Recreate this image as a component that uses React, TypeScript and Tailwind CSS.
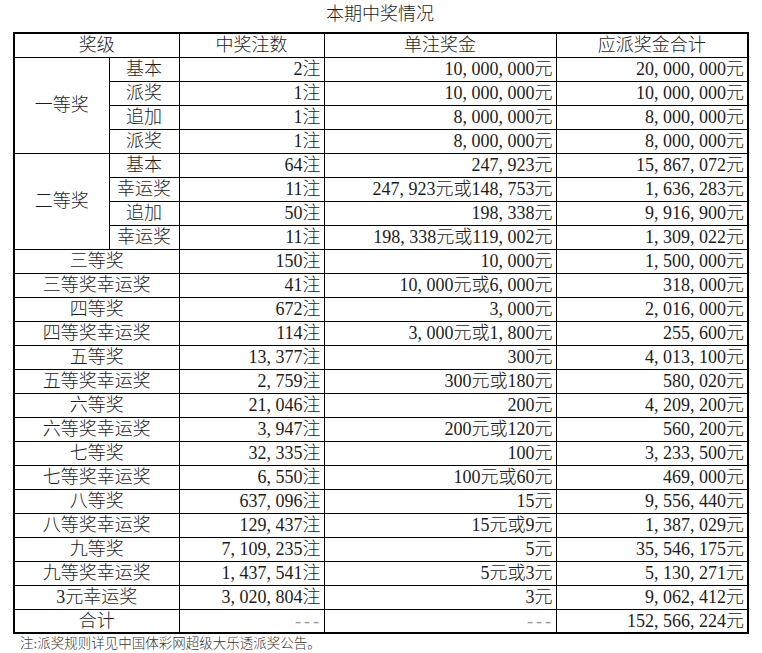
import React from "react";

const FONT = '"Liberation Serif", "Noto Sans CJK SC", serif';

function Num({ s }: { s: string }) {
  const parts: React.ReactNode[] = [];
  let buf = "";
  let k = 0;
  for (const ch of s) {
    if (ch === ",") {
      if (buf) parts.push(<span key={k++}>{buf}</span>);
      buf = "";
      parts.push(
        <span key={k++} className="inline-block w-[0.5em] text-left">
          ,
        </span>
      );
    } else buf += ch;
  }
  if (buf) parts.push(<span key={k++}>{buf}</span>);
  return <>{parts}</>;
}

function Dashes() {
  return (
    <>
      <span className="inline-block w-[0.5em] text-center">-</span>
      <span className="inline-block w-[0.5em] text-center">-</span>
      <span className="inline-block w-[0.5em] text-center">-</span>
    </>
  );
}

type Sub = [string, string, string, string];

const first: Sub[] = [
  ["基本", "2注", "10,000,000元", "20,000,000元"],
  ["派奖", "1注", "10,000,000元", "10,000,000元"],
  ["追加", "1注", "8,000,000元", "8,000,000元"],
  ["派奖", "1注", "8,000,000元", "8,000,000元"],
];
const second: Sub[] = [
  ["基本", "64注", "247,923元", "15,867,072元"],
  ["幸运奖", "11注", "247,923元或148,753元", "1,636,283元"],
  ["追加", "50注", "198,338元", "9,916,900元"],
  ["幸运奖", "11注", "198,338元或119,002元", "1,309,022元"],
];
const rest: Sub[] = [
  ["三等奖", "150注", "10,000元", "1,500,000元"],
  ["三等奖幸运奖", "41注", "10,000元或6,000元", "318,000元"],
  ["四等奖", "672注", "3,000元", "2,016,000元"],
  ["四等奖幸运奖", "114注", "3,000元或1,800元", "255,600元"],
  ["五等奖", "13,377注", "300元", "4,013,100元"],
  ["五等奖幸运奖", "2,759注", "300元或180元", "580,020元"],
  ["六等奖", "21,046注", "200元", "4,209,200元"],
  ["六等奖幸运奖", "3,947注", "200元或120元", "560,200元"],
  ["七等奖", "32,335注", "100元", "3,233,500元"],
  ["七等奖幸运奖", "6,550注", "100元或60元", "469,000元"],
  ["八等奖", "637,096注", "15元", "9,556,440元"],
  ["八等奖幸运奖", "129,437注", "15元或9元", "1,387,029元"],
  ["九等奖", "7,109,235注", "5元", "35,546,175元"],
  ["九等奖幸运奖", "1,437,541注", "5元或3元", "5,130,271元"],
  ["3元幸运奖", "3,020,804注", "3元", "9,062,412元"],
];

const td = "border border-black p-0 h-[24px] leading-[22px] whitespace-nowrap";
const num = `${td} text-right pr-[3px]`;
const ctr = `${td} text-center`;

function Group({ label, rows }: { label: string; rows: Sub[] }) {
  return (
    <>
      {rows.map((r, i) => (
        <tr key={i}>
          {i === 0 && (
            <td rowSpan={rows.length} className={ctr}>
              {label}
            </td>
          )}
          <td className={ctr}>{r[0]}</td>
          <td className={num}>
            <Num s={r[1]} />
          </td>
          <td className={num}>
            <Num s={r[2]} />
          </td>
          <td className={num}>
            <Num s={r[3]} />
          </td>
        </tr>
      ))}
    </>
  );
}

export default function App() {
  return (
    <div
      className="w-[762px] h-[653px] bg-white text-[#1c1c1c] overflow-hidden font-light"
      style={{ fontFamily: FONT }}
    >
      <div className="w-[762px] pl-[13px]">
        <div className="w-[734px] h-[32px] text-center text-[18px] leading-[28px]">
          本期中奖情况
        </div>
        <table className="table-fixed border-collapse border-2 border-black w-[734px] text-[18px]">
          <colgroup>
            <col className="w-[95px]" />
            <col className="w-[70px]" />
            <col className="w-[145px]" />
            <col className="w-[232px]" />
            <col className="w-[192px]" />
          </colgroup>
          <tbody>
            <tr>
              <td colSpan={2} className={ctr}>
                奖级
              </td>
              <td className={ctr}>中奖注数</td>
              <td className={ctr}>单注奖金</td>
              <td className={ctr}>应派奖金合计</td>
            </tr>
            <Group label="一等奖" rows={first} />
            <Group label="二等奖" rows={second} />
            {rest.map((r, i) => (
              <tr key={i}>
                <td colSpan={2} className={ctr}>
                  {r[0]}
                </td>
                <td className={num}>
                  <Num s={r[1]} />
                </td>
                <td className={num}>
                  <Num s={r[2]} />
                </td>
                <td className={num}>
                  <Num s={r[3]} />
                </td>
              </tr>
            ))}
            <tr>
              <td colSpan={2} className={ctr}>
                合计
              </td>
              <td className={`${num} text-[#9a9a9a]`}>
                <Dashes />
              </td>
              <td className={`${num} text-[#9a9a9a]`}>
                <Dashes />
              </td>
              <td className={num}>
                <Num s="152,566,224元" />
              </td>
            </tr>
          </tbody>
        </table>
        <div className="pl-[7px] pt-[2px] text-[13.5px] leading-[16px] text-[#333]">
          注:派奖规则详见中国体彩网超级大乐透派奖公告。
        </div>
      </div>
    </div>
  );
}
